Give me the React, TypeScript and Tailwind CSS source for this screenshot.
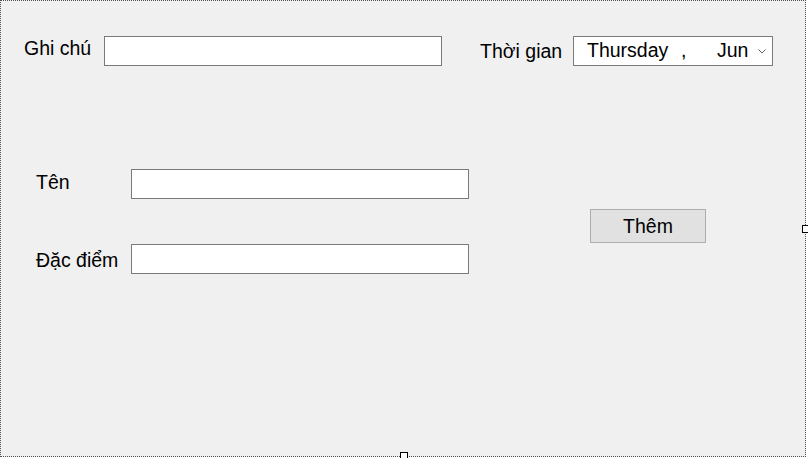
export default function App() {
  return (
    <div className="relative w-[808px] h-[458px] bg-white font-['Liberation_Sans',Arial,sans-serif] text-[19.5px] leading-[22px] text-black">
      <div className="w-[806px] h-[457px] border border-dotted border-[#505050] bg-[#f0f0f0]">
        {/* top row */}
        <div className="flex items-start mt-[35px]">
          <label className="ml-[23px] w-[80px] mt-[1px] whitespace-nowrap">Ghi chú</label>
          <div className="w-[338px] h-[30px] border border-[#7a7a7a] bg-white" />
          <label className="ml-[38px] w-[93px] mt-[3.5px] whitespace-nowrap">Thời gian</label>
          <div className="flex items-start w-[200px] h-[30px] border border-[#7a7a7a] bg-white pl-[13px] pt-[2px] overflow-hidden">
            <span className="w-[94px] shrink-0">Thursday</span>
            <span className="w-[36px] shrink-0">,</span>
            <span className="shrink-0">Jun</span>
            <svg className="ml-auto mr-[6px] mt-[10px] shrink-0" width="8" height="5" viewBox="0 0 8 5">
              <polyline points="0.5,0.5 4,4 7.5,0.5" fill="none" stroke="#606060" strokeWidth="1" />
            </svg>
          </div>
        </div>

        {/* fields + button */}
        <div className="flex items-start mt-[103px]">
          <div className="ml-[35px] flex flex-col">
            <div className="flex items-start">
              <label className="w-[95px] mt-[2px] whitespace-nowrap">Tên</label>
              <div className="w-[338px] h-[30px] border border-[#7a7a7a] bg-white" />
            </div>
            <div className="flex items-start mt-[45px]">
              <label className="w-[95px] mt-[5px] whitespace-nowrap">Đặc điểm</label>
              <div className="w-[338px] h-[30px] border border-[#7a7a7a] bg-white" />
            </div>
          </div>
          <button className="ml-[121px] mt-[40px] w-[116px] h-[34px] flex items-center justify-center pb-[1px] border border-[#adadad] bg-[#e1e1e1]">
            Thêm
          </button>
        </div>
      </div>

      {/* designer resize handles */}
      <div className="absolute left-[802px] top-[225px] w-[7px] h-[8px] border border-black bg-white" />
      <div className="absolute left-[400px] top-[452px] w-[8px] h-[7px] border border-black bg-white" />
    </div>
  );
}
